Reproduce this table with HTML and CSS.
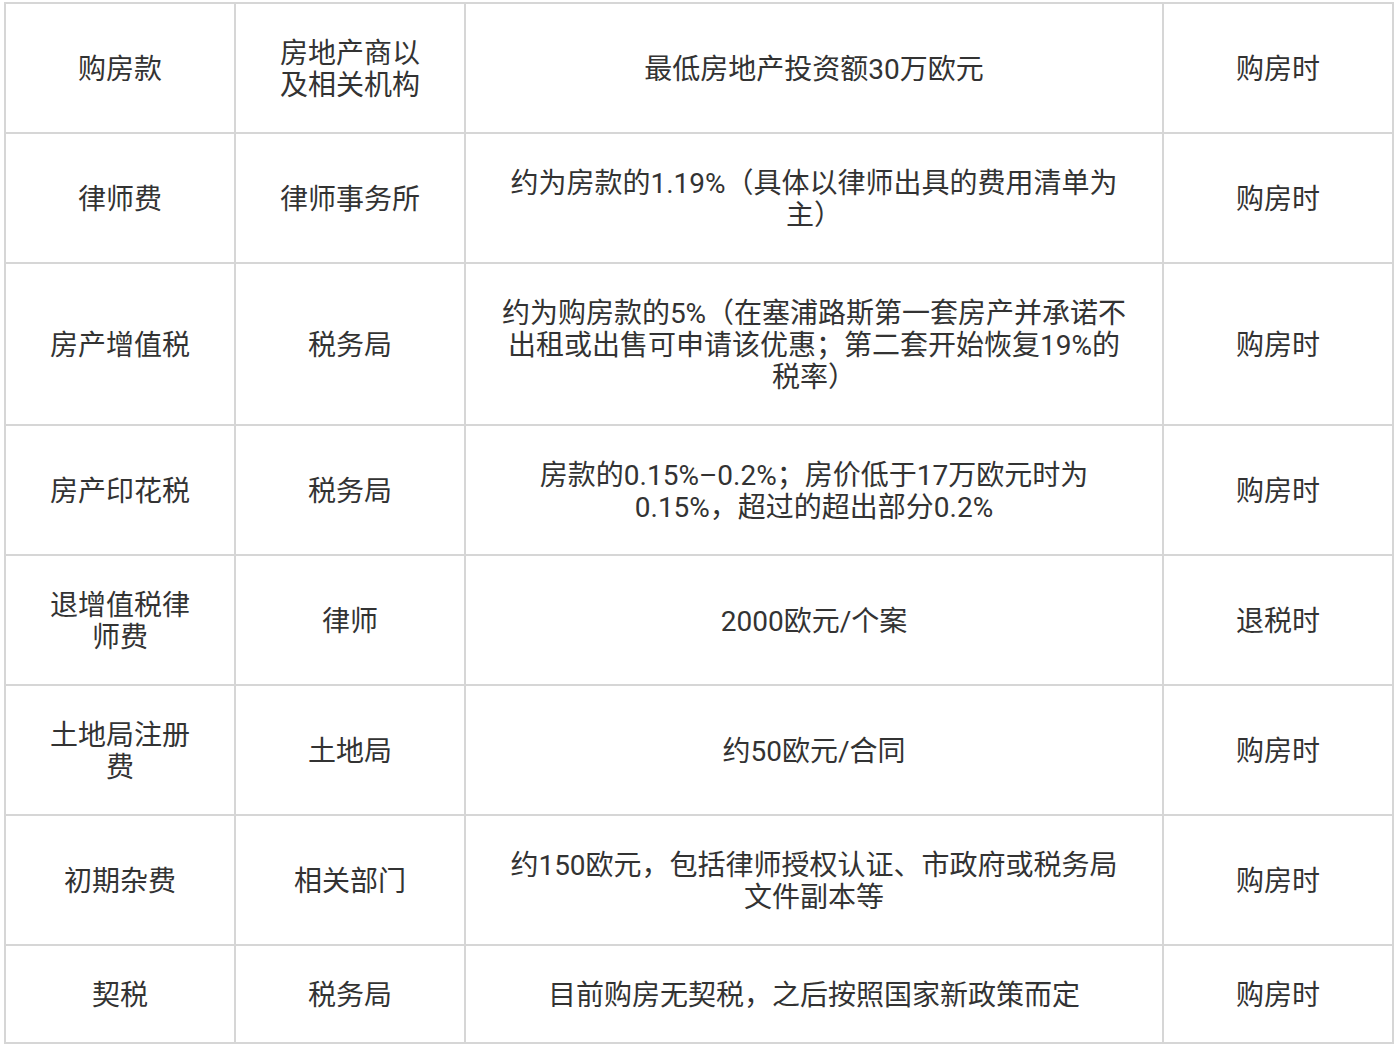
FILE: index.html
```html
<!DOCTYPE html>
<html lang="zh-CN">
<head>
<meta charset="utf-8">
<title>费用表</title>
<link rel="stylesheet" href="styles.css">
</head>
<body>
<div class="wrap">
<table class="fees">
  <colgroup>
    <col class="c-narrow">
    <col class="c-narrow">
    <col class="c-wide">
    <col class="c-narrow">
  </colgroup>
  <tbody>
    <tr><td>购房款</td><td>房地产商以及相关机构</td><td>最低房地产投资额30万欧元</td><td>购房时</td></tr>
    <tr><td>律师费</td><td>律师事务所</td><td>约为房款的1.19%（具体以律师出具的费用清单为主）</td><td>购房时</td></tr>
    <tr><td>房产增值税</td><td>税务局</td><td>约为购房款的5%（在塞浦路斯第一套房产并承诺不出租或出售可申请该优惠；第二套开始恢复19%的税率）</td><td>购房时</td></tr>
    <tr><td>房产印花税</td><td>税务局</td><td>房款的0.15%–0.2%；房价低于17万欧元时为0.15%，超过的超出部分0.2%</td><td>购房时</td></tr>
    <tr><td>退增值税律师费</td><td>律师</td><td>2000欧元/个案</td><td>退税时</td></tr>
    <tr><td>土地局注册费</td><td>土地局</td><td>约50欧元/合同</td><td>购房时</td></tr>
    <tr><td>初期杂费</td><td>相关部门</td><td>约150欧元，包括律师授权认证、市政府或税务局文件副本等</td><td>购房时</td></tr>
    <tr><td>契税</td><td>税务局</td><td>目前购房无契税，之后按照国家新政策而定</td><td>购房时</td></tr>
  </tbody>
</table>
</div>
</body>
</html>
```

FILE: styles.css
```css
html, body {
  margin: 0;
  padding: 0;
  background: #ffffff;
}

.wrap {
  padding: 2px 4px;
}

.fees {
  border-collapse: collapse;
  table-layout: fixed;
  width: 1390px;
  font-family: Roboto, "Noto Sans CJK SC", sans-serif;
  font-size: 28px;
  line-height: 32px;
  color: #333333;
}

.c-narrow {
  width: 230px;
}

.c-wide {
  width: 698px;
}

.fees td {
  border: 2px solid #d6d6d6;
  padding: 34px 32px 30px;
  text-align: center;
  vertical-align: middle;
  word-break: normal;
}
```
